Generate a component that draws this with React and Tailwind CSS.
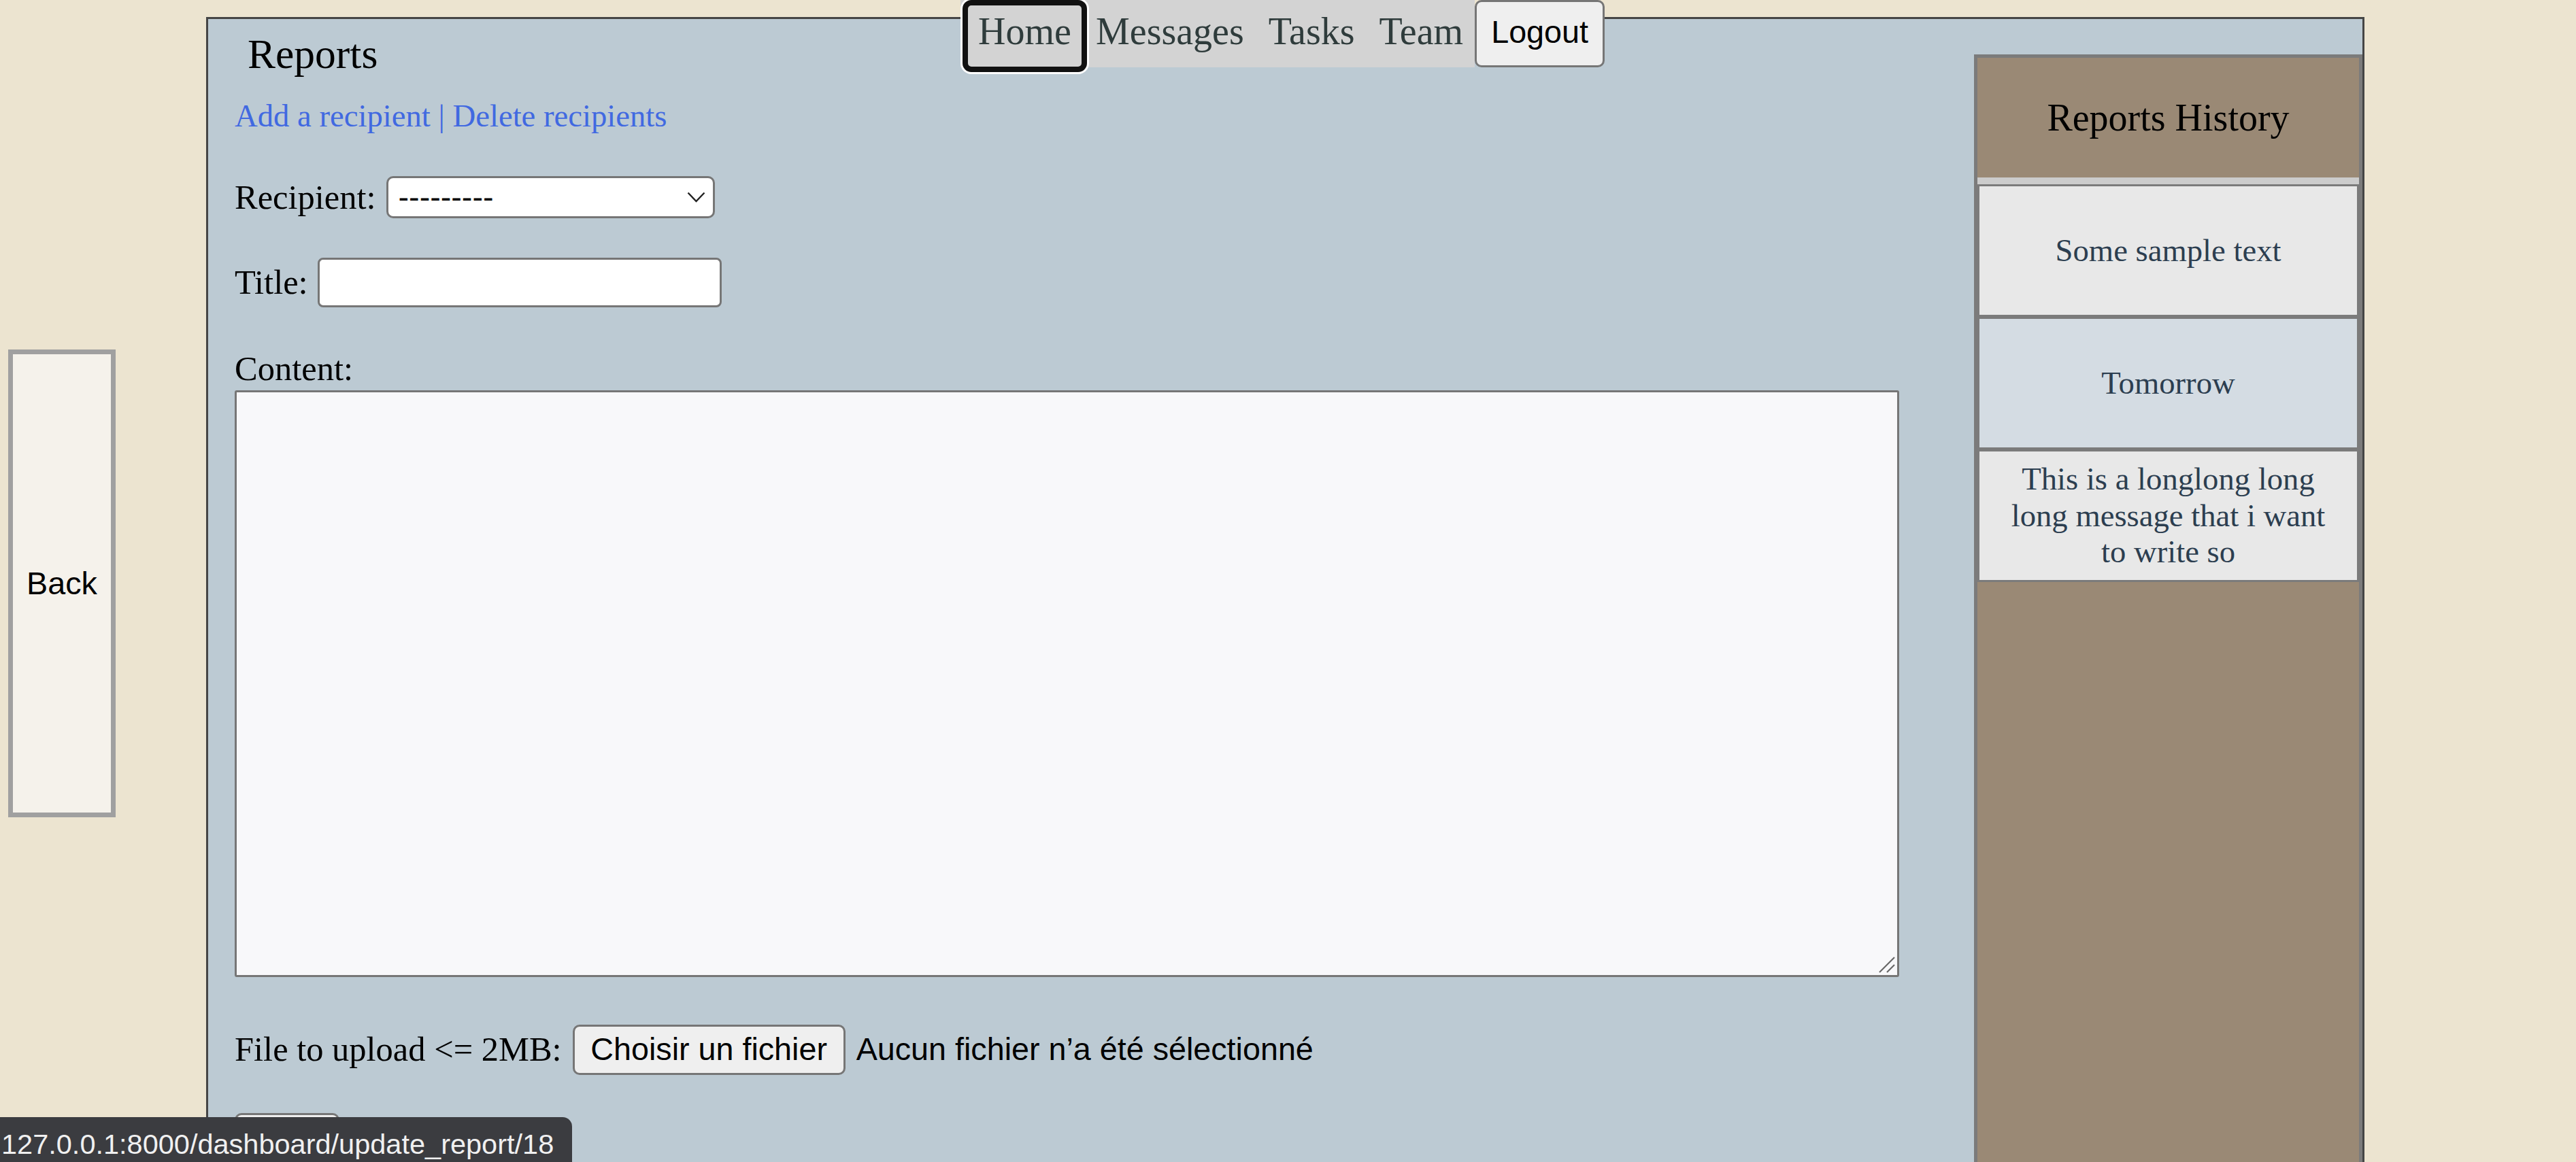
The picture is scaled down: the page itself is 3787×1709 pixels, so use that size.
export default function App() {
  const serif = "font-['Liberation_Serif',serif]";
  const sans = "font-['Liberation_Sans',Arial,sans-serif]";
  return (
    <div className={`relative h-[1709px] w-[3787px] overflow-hidden bg-[#ece4d0] ${serif}`}>
      <div className="flex h-full">
        {/* Back column */}
        <div className="w-[303px] shrink-0 pl-[12px] pt-[514px]">
          <button
            className={`flex h-[688px] w-[158px] items-center justify-center border-[7px] border-[#a0a0a0] bg-[#f5f2eb] ${sans} text-[46.7px] leading-none text-black`}
          >
            Back
          </button>
        </div>

        {/* Main panel */}
        <div className="mt-[25px] flex h-[1800px] w-[3173px] shrink-0 border-[3px] border-[#454545] bg-[#bccad3]">
          <div className="flex-1 pl-[39px]">
            <h1 className="ml-[19px] mt-[21px] text-[61.5px] font-normal leading-none text-black">Reports</h1>

            <div className="mt-[36px] text-[46.7px] leading-none text-[#4169e1]">
              <a href="#">Add a recipient</a> | <a href="#">Delete recipients</a>
            </div>

            <div className="mt-[66px] flex h-[62px] items-center">
              <span className="text-[50.5px] leading-none text-black">Recipient:</span>
              <div className="ml-[15px] flex h-[62px] w-[483px] items-center justify-between rounded-[10px] border-[3px] border-[#767676] bg-white pl-[15px] pr-[11px]">
                <span className={`${sans} text-[46.7px] leading-none text-black`}>---------</span>
                <svg width="27" height="16" viewBox="0 0 27 16" fill="none">
                  <polyline points="1.5,1.5 13.5,14 25.5,1.5" stroke="#222" strokeWidth="2.4" />
                </svg>
              </div>
            </div>

            <div className="mt-[58px] flex h-[73px] items-center">
              <span className="text-[50.5px] leading-none text-black">Title:</span>
              <input
                type="text"
                className="ml-[14px] h-[73px] w-[594px] rounded-[8px] border-[3px] border-[#767676] bg-white"
              />
            </div>

            <div className="mt-[65px] text-[50.5px] leading-none text-black">Content:</div>

            <div className="relative mt-[6px] h-[863px] w-[2447px]">
              <textarea className="block h-[863px] w-[2447px] resize-none rounded-[3px] border-[3px] border-[#767676] bg-[#f8f8fa]" />
              <svg className="absolute bottom-[5px] right-[5px]" width="26" height="26" viewBox="0 0 26 26">
                <line x1="2" y1="24" x2="24" y2="2" stroke="#666" strokeWidth="2.2" />
                <line x1="13" y1="24" x2="24" y2="13" stroke="#666" strokeWidth="2.2" />
              </svg>
            </div>

            <div className="mt-[70px] flex h-[74px] items-center">
              <span className="text-[50.5px] leading-none text-black">File to upload &lt;= 2MB:</span>
              <button
                className={`ml-[16px] flex h-[74px] w-[401px] items-center justify-center rounded-[10px] border-[3px] border-[#767676] bg-[#efefef] ${sans} text-[46.7px] leading-none text-black`}
              >
                Choisir un fichier
              </button>
              <span className={`ml-[16px] ${sans} text-[46.7px] leading-none text-black`}>
                Aucun fichier n’a été sélectionné
              </span>
            </div>

            <button
              className={`mt-[56px] flex h-[74px] w-[154px] items-center justify-center rounded-[10px] border-[3px] border-[#767676] bg-[#efefef] ${sans} text-[46.7px] leading-none text-black`}
            >
              Save
            </button>
          </div>

          {/* Sidebar */}
          <aside className="mt-[52px] flex h-[1800px] w-[571px] shrink-0 flex-col border-[5px] border-[#7b7b7b] bg-[#9a8975]">
            <div className="flex h-[176px] items-center justify-center text-[56px] leading-none text-black">
              Reports History
            </div>
            <div className="h-[10px] bg-[#cccccc]" />
            <div className="flex h-[195px] items-center justify-center border-[3px] border-[#7b7b7b] bg-[#e8e8e8] px-[37px] text-center text-[46.7px] leading-none text-[#2c3e50]">
              Some sample text
            </div>
            <div className="flex h-[195px] items-center justify-center border-[3px] border-[#7b7b7b] bg-[#d4dce3] px-[37px] text-center text-[46.7px] leading-none text-[#2c3e50]">
              Tomorrow
            </div>
            <div className="flex h-[195px] items-center justify-center border-[3px] border-[#7b7b7b] bg-[#e8e8e8] px-[40px] text-center text-[46.7px] leading-[1.15] text-[#2c3e50]">
              This is a longlong long long message that i want to write so
            </div>
          </aside>
        </div>
      </div>

      {/* Top navigation */}
      <nav className="absolute left-[1412px] top-0 flex items-start">
        <div className="flex h-[99px] items-start bg-[#d3d3d3] pl-[3px] pr-[17px] text-[56px] leading-none text-[#2f3c3c]">
          <a
            href="#"
            className="flex h-[106px] w-[183px] justify-center rounded-[13px] border-[8px] border-[#111] bg-[#d3d3d3] pt-[10px] ring-[3px] ring-white"
          >
            Home
          </a>
          <a href="#" className="ml-[13px] pt-[18px]">Messages</a>
          <a href="#" className="ml-[36px] pt-[18px]">Tasks</a>
          <a href="#" className="ml-[36px] pt-[18px]">Team</a>
        </div>
        <button
          className={`flex h-[99px] w-[191px] justify-center rounded-[10px] border-[3px] border-[#767676] bg-[#efefef] pt-[21px] ${sans} text-[46.7px] leading-none text-black`}
        >
          Logout
        </button>
      </nav>

      {/* Status bubble */}
      <div
        className={`absolute bottom-0 left-0 h-[66px] w-[841px] rounded-tr-[14px] bg-[#3b3c40] pl-[2px] pt-[19px] ${sans} text-[41.5px] leading-none text-[#f0f0f0]`}
      >
        127.0.0.1:8000/dashboard/update_report/18
      </div>
    </div>
  );
}
